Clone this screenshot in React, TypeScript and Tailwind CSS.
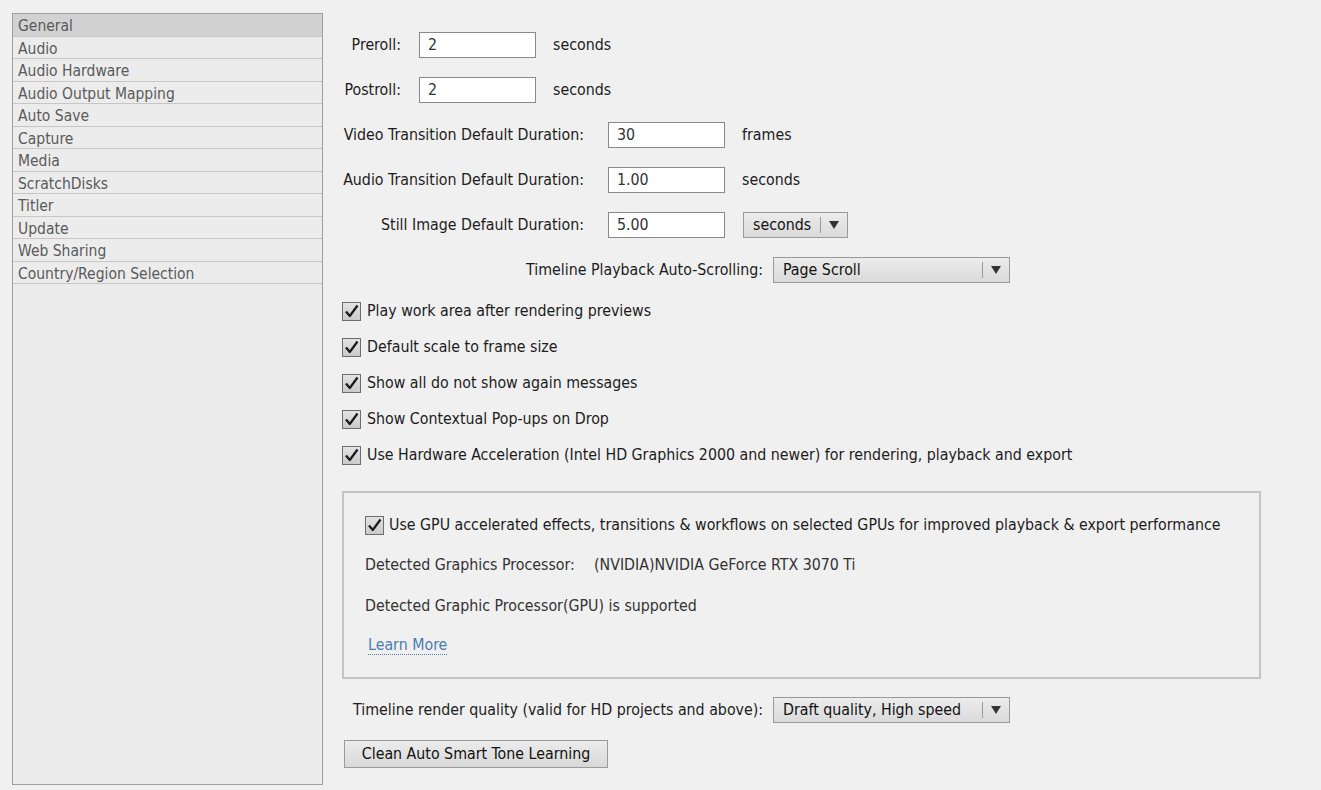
import React from 'react';

const font = { fontFamily: '"DejaVu Sans Condensed", "DejaVu Sans", sans-serif' };

const sections = [
  'General',
  'Audio',
  'Audio Hardware',
  'Audio Output Mapping',
  'Auto Save',
  'Capture',
  'Media',
  'ScratchDisks',
  'Titler',
  'Update',
  'Web Sharing',
  'Country/Region Selection',
];

const Checkbox = () => (
  <svg width="19" height="19" viewBox="0 0 19 19" className="shrink-0">
    <defs>
      <linearGradient id="cb" x1="0" y1="0" x2="0" y2="1">
        <stop offset="0" stopColor="#e4e4e4" />
        <stop offset="1" stopColor="#c9c9c9" />
      </linearGradient>
    </defs>
    <rect x="0.5" y="0.5" width="18" height="18" fill="url(#cb)" stroke="#6d6d6d" />
    <path d="M4 9.5 L7.8 14 L15.5 3.5" fill="none" stroke="#1a1a1a" strokeWidth="2.2" strokeLinejoin="round" />
  </svg>
);

const TextBox = ({ value, width = 'w-[117px]' }: { value: string; width?: string }) => (
  <div className={`${width} h-[26px] bg-white border border-[#8a8a8a] flex items-center pl-2 text-[#333]`}>
    {value}
  </div>
);

const Dropdown = ({ value, width }: { value: string; width: string }) => (
  <div className={`${width} h-[26px] border border-[#9a9a9a] bg-gradient-to-b from-[#ececec] to-[#dadada] flex items-center text-[#111]`}>
    <span className="flex-1 pl-[9px]">{value}</span>
    <span className="h-[16px] w-px bg-[#9a9a9a]" />
    <span className="w-[26px] flex items-center justify-center">
      <svg width="10" height="8" viewBox="0 0 10 8">
        <path d="M0 0 H10 L5 8 Z" fill="#333" />
      </svg>
    </span>
  </div>
);

const CheckRow = ({ label }: { label: string }) => (
  <div className="h-[36px] flex items-center gap-[6px] text-[#1c1c1c]">
    <Checkbox />
    <span>{label}</span>
  </div>
);

export default function App() {
  return (
    <div className="w-[1321px] h-[790px] bg-[#f0f0f0] flex text-[15.8px] overflow-hidden" style={font}>
      <div className="ml-[12px] mt-[13px] w-[311px] h-[772px] border border-[#9f9f9f] bg-[#ececec] shrink-0 text-[15.5px]">
        {sections.map((s, i) => (
          <div
            key={s}
            className={`h-[22.5px] leading-[24px] pl-[5px] border-b border-[#c6c6c6] text-[#5a5a5a] ${
              i === 0 ? 'bg-[#d2d2d2]' : 'bg-[#ececec]'
            }`}
          >
            {s}
          </div>
        ))}
      </div>

      <div className="ml-[19px] pt-[32px] flex flex-col text-[#1c1c1c]">
        <div className="h-[45px] flex items-start">
          <span className="w-[59px] text-right leading-[26px] whitespace-nowrap">Preroll:</span>
          <span className="ml-[18px]"><TextBox value="2" /></span>
          <span className="ml-[17px] leading-[26px]">seconds</span>
        </div>
        <div className="h-[45px] flex items-start">
          <span className="w-[59px] text-right leading-[26px] whitespace-nowrap">Postroll:</span>
          <span className="ml-[18px]"><TextBox value="2" /></span>
          <span className="ml-[17px] leading-[26px]">seconds</span>
        </div>
        <div className="h-[45px] flex items-start">
          <span className="w-[242px] text-right leading-[26px] whitespace-nowrap">Video Transition Default Duration:</span>
          <span className="ml-[24px]"><TextBox value="30" /></span>
          <span className="ml-[17px] leading-[26px]">frames</span>
        </div>
        <div className="h-[45px] flex items-start">
          <span className="w-[242px] text-right leading-[26px] whitespace-nowrap">Audio Transition Default Duration:</span>
          <span className="ml-[24px]"><TextBox value="1.00" /></span>
          <span className="ml-[17px] leading-[26px]">seconds</span>
        </div>
        <div className="h-[45px] flex items-start">
          <span className="w-[242px] text-right leading-[26px] whitespace-nowrap">Still Image Default Duration:</span>
          <span className="ml-[24px]"><TextBox value="5.00" /></span>
          <span className="ml-[18px]"><Dropdown value="seconds" width="w-[105px]" /></span>
        </div>
        <div className="h-[36px] flex items-start">
          <span className="w-[421px] text-right leading-[26px] whitespace-nowrap">Timeline Playback Auto-Scrolling:</span>
          <span className="ml-[10px]"><Dropdown value="Page Scroll" width="w-[237px]" /></span>
        </div>

        <div className="flex flex-col">
          <CheckRow label="Play work area after rendering previews" />
          <CheckRow label="Default scale to frame size" />
          <CheckRow label="Show all do not show again messages" />
          <CheckRow label="Show Contextual Pop-ups on Drop" />
          <CheckRow label="Use Hardware Acceleration (Intel HD Graphics 2000 and newer) for rendering, playback and export" />
        </div>

        <div className="mt-[18px] w-[919px] h-[188px] border-2 border-[#c4c4c4] bg-[#f0f0f0] pl-[21px] pt-[20px] flex flex-col">
          <div className="h-[24px] flex items-center gap-[5px] text-[#1c1c1c]">
            <Checkbox />
            <span className="whitespace-nowrap">Use GPU accelerated effects, transitions &amp; workflows on selected GPUs for improved playback &amp; export performance</span>
          </div>
          <div className="mt-[16px] flex text-[#333]">
            <span className="w-[229px]">Detected Graphics Processor:</span>
            <span>(NVIDIA)NVIDIA GeForce RTX 3070 Ti</span>
          </div>
          <div className="mt-[17px] text-[#333]">Detected Graphic Processor(GPU) is supported</div>
          <div className="mt-[16px] ml-[3px]">
            <span className="text-[#4a7db3] border-b border-dotted border-[#4a7db3] leading-[19px] inline-block">Learn More</span>
          </div>
        </div>

        <div className="mt-[18px] h-[26px] flex items-center">
          <span className="ml-[11px] w-[420px] text-[#1c1c1c] whitespace-nowrap">Timeline render quality (valid for HD projects and above):</span>
          <Dropdown value="Draft quality, High speed" width="w-[237px]" />
        </div>

        <div className="mt-[17px] ml-[2px]">
          <div className="w-[264px] h-[28px] border border-[#9a9a9a] bg-gradient-to-b from-[#ececec] to-[#d8d8d8] flex items-center justify-center text-[#111]">
            Clean Auto Smart Tone Learning
          </div>
        </div>
      </div>
    </div>
  );
}
